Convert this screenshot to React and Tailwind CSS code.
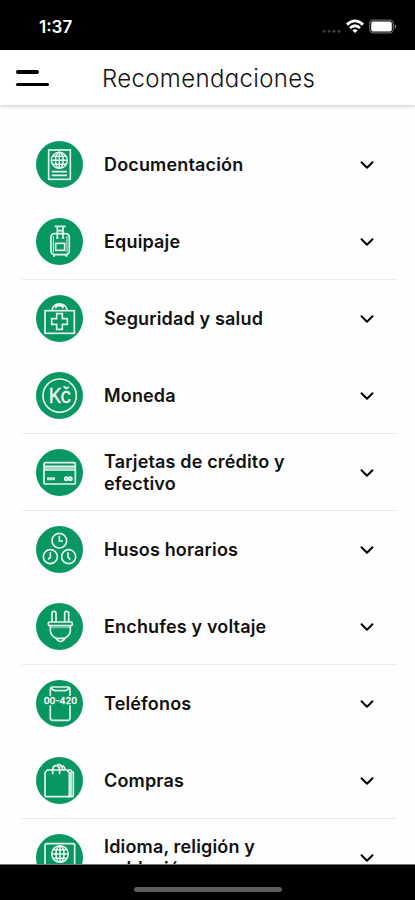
import { ChevronDown } from 'lucide-react';

// Trazos del globo, reutilizado en documentación e idioma
function Globe({ cx, cy, r }) {
  return (
    <g strokeWidth="4.5">
      <circle cx={cx} cy={cy} r={r} />
      <ellipse cx={cx} cy={cy} rx={r * 0.48} ry={r} />
      <path d={`M${cx} ${cy - r}v${r * 2}M${cx - r} ${cy}h${r * 2}M${cx - r * 0.86} ${cy - r * 0.5}h${r * 1.72}M${cx - r * 0.86} ${cy + r * 0.5}h${r * 1.72}`} />
    </g>
  );
}

const icons = {
  passport: (
    <>
      <rect x="38" y="27" width="65" height="88" />
      <Globe cx={70} cy={58} r={24} />
      <path d="M47 92h46M47 103h46" />
    </>
  ),
  luggage: (
    <>
      <path d="M56 25h33M64 25v34M81 25v34M64 38h17M60 60h8M77 60h8" />
      <rect x="45" y="47" width="55" height="63" rx="10" />
      <path d="M52 54v50M93 54v50" strokeWidth="3" />
      <rect x="59" y="76" width="27" height="21" />
      <path d="M54 110v6M91 110v6" strokeWidth="6" />
    </>
  ),
  firstAid: (
    <>
      <rect x="27" y="47" width="88" height="68" />
      <path d="M48 46c2-26 43-26 45 0M58 40c4-11 20-11 24 0M56 32h29" />
      <path d="M62 56h17v15h15v17H79v15H62V88H47V71h15z" />
    </>
  ),
  currency: (
    <>
      <circle cx="71" cy="71" r="50" />
      <text x="38" y="93" textLength="68" lengthAdjust="spacingAndGlyphs" fill="white" strokeWidth="1" className="font-['Inter'] text-[62px]">Kč</text>
    </>
  ),
  card: (
    <>
      <rect x="24" y="41" width="94" height="64" rx="4" />
      <path d="M24 52h94M24 63h94" />
      <path d="M26 57h90" strokeWidth="7" opacity=".65" />
      <path d="M33 89h24" strokeWidth="9" opacity=".85" />
      <circle cx="91" cy="89" r="4.5" strokeWidth="6" />
      <circle cx="103" cy="89" r="4.5" strokeWidth="6" />
    </>
  ),
  clocks: (
    <>
      <circle cx="70" cy="44" r="22" />
      <circle cx="43" cy="92" r="21" />
      <circle cx="98" cy="92" r="21" />
      <path d="M70 29v16h11M43 79v15l-7 6M96 79v14l7 8" />
    </>
  ),
  plug: (
    <>
      <path d="M48 57V31q0-6 6-6t6 6v26M86 57V31q0-6 6-6t6 6v26" />
      <rect x="37" y="57" width="72" height="11" rx="4" />
      <path d="M43 68v14q0 14 14 22l4 2h24l4-2q14-8 14-22V68M62 106v3l8 6h7l8-6v-3" />
      <path d="M44 74h58" strokeWidth="3" opacity=".6" />
    </>
  ),
  phone: (
    <>
      <path d="M43 48V28q0-7 7-7h45q7 0 7 7v20M43 76v38q0 7 7 7h45q7 0 7-7V76" />
      <path d="M47 24q3 8 11 8h29q8 0 11-8" />
      <text x="23" y="72" textLength="100" lengthAdjust="spacingAndGlyphs" fill="white" strokeWidth="1" className="font-['Inter'] text-[28px] font-medium">00-420</text>
    </>
  ),
  bag: (
    <>
      <path d="M34 39h59l7 9v65q0 6-6 6H33q-6 0-6-6V47z" />
      <path d="M93 39h10l9 8v66q0 6-6 6H94M105 44v72" />
      <path d="M50 52V40q0-14 10-14t11 14v12M63 26q4-5 8-3 8 3 9 16M73 30q4-5 8-3 6 3 7 12" />
    </>
  ),
  language: (
    <>
      <rect x="27" y="29" width="89" height="70" rx="6" />
      <Globe cx={72} cy={60} r={25} />
    </>
  ),
};

const items = [
  { icon: 'passport', label: 'Documentación' },
  { icon: 'luggage', label: 'Equipaje', divider: true },
  { icon: 'firstAid', label: 'Seguridad y salud' },
  { icon: 'currency', label: 'Moneda', divider: true },
  { icon: 'card', label: 'Tarjetas de crédito y efectivo', divider: true },
  { icon: 'clocks', label: 'Husos horarios' },
  { icon: 'plug', label: 'Enchufes y voltaje', divider: true },
  { icon: 'phone', label: 'Teléfonos' },
  { icon: 'bag', label: 'Compras', divider: true },
  { icon: 'language', label: 'Idioma, religión y población' },
];

function StatusBar() {
  return (
    <div className="flex h-[50px] shrink-0 items-start justify-between bg-black pr-[18px] pl-[39px] text-white">
      <span className="mt-[17px] text-[17px] leading-5 font-semibold">1:37</span>
      <div className="mt-[19px] flex items-center">
        <svg className="mr-[5px] h-4 w-[19px]" viewBox="0 0 19 16" fill="#3d3d3d">
          <circle cx="2" cy="12.2" r="1.5" />
          <circle cx="7" cy="12.2" r="1.5" />
          <circle cx="12" cy="12.2" r="1.5" />
          <circle cx="17" cy="12.2" r="1.5" />
        </svg>
        <svg className="mr-[5px] h-4 w-[18px]" viewBox="0 0 18 16" fill="none" stroke="white" strokeWidth="2.8">
          <path d="M1 5.6q8-7.4 16 0" />
          <path d="M4 9q5-4.4 10 0" />
          <path d="M6.3 11.3q2.7-2 5.4 0L9 14z" fill="white" stroke="none" />
        </svg>
        <svg className="h-4 w-[28px]" viewBox="0 0 28 16">
          <rect x=".7" y="1.2" width="23.6" height="12.6" rx="3.6" fill="none" stroke="#666" strokeWidth="1.2" />
          <rect x="2.2" y="2.6" width="20.6" height="9.8" rx="2" fill="white" />
          <path d="M25.8 5.2q3 2.2 0 4.6z" fill="#888" />
        </svg>
      </div>
    </div>
  );
}

function Row({ icon, label, divider }) {
  return (
    <li className={`flex h-[77px] shrink-0 items-center border-b pl-[14px] pr-[18px] ${divider ? 'border-[#e9e9e9]' : 'border-transparent'}`}>
      <svg className="size-[47px] shrink-0 rounded-full bg-[#079761]" viewBox="0 0 141 141" fill="none" stroke="white" strokeOpacity=".9" strokeWidth="5">
        {icons[icon]}
      </svg>
      <span className="ml-[21px] w-[200px] pt-0.5 text-[18px] leading-[22px] font-semibold tracking-[0.16px] text-[#111]">{label}</span>
      <ChevronDown className="mt-0.5 ml-auto size-[22px] text-black" strokeWidth={2.1} />
    </li>
  );
}

export default function App() {
  return (
    <div className="flex h-[900px] w-[415px] flex-col overflow-hidden bg-[#fefefe] font-['Inter',sans-serif]">
      <StatusBar />
      <header className="flex h-[55px] shrink-0 items-center bg-white pl-4 shadow-[0_1px_4px_rgba(0,0,0,0.22)]">
        <button className="flex w-[33px] flex-col gap-[9px]" aria-label="Menú">
          <span className="h-1 w-[23px] rounded-full bg-black" />
          <span className="h-[3px] w-[33px] rounded-full bg-black" />
        </button>
        <h1 className="ml-[53px] pt-[3px] text-[24px] leading-8 font-[330] tracking-[0.35px] text-[#111] [font-feature-settings:'cv11']">Recomendaciones</h1>
      </header>
      <ul className="mr-[19px] ml-[22px] flex min-h-0 flex-1 flex-col overflow-hidden pt-[21px]">
        {items.map((item) => (
          <Row key={item.icon} {...item} />
        ))}
      </ul>
      <footer className="flex h-9 shrink-0 items-center justify-center border-t border-[#777] bg-black pt-[13px]">
        <span className="h-[5px] w-[148px] rounded-full bg-[#5c5c5c]" />
      </footer>
    </div>
  );
}
